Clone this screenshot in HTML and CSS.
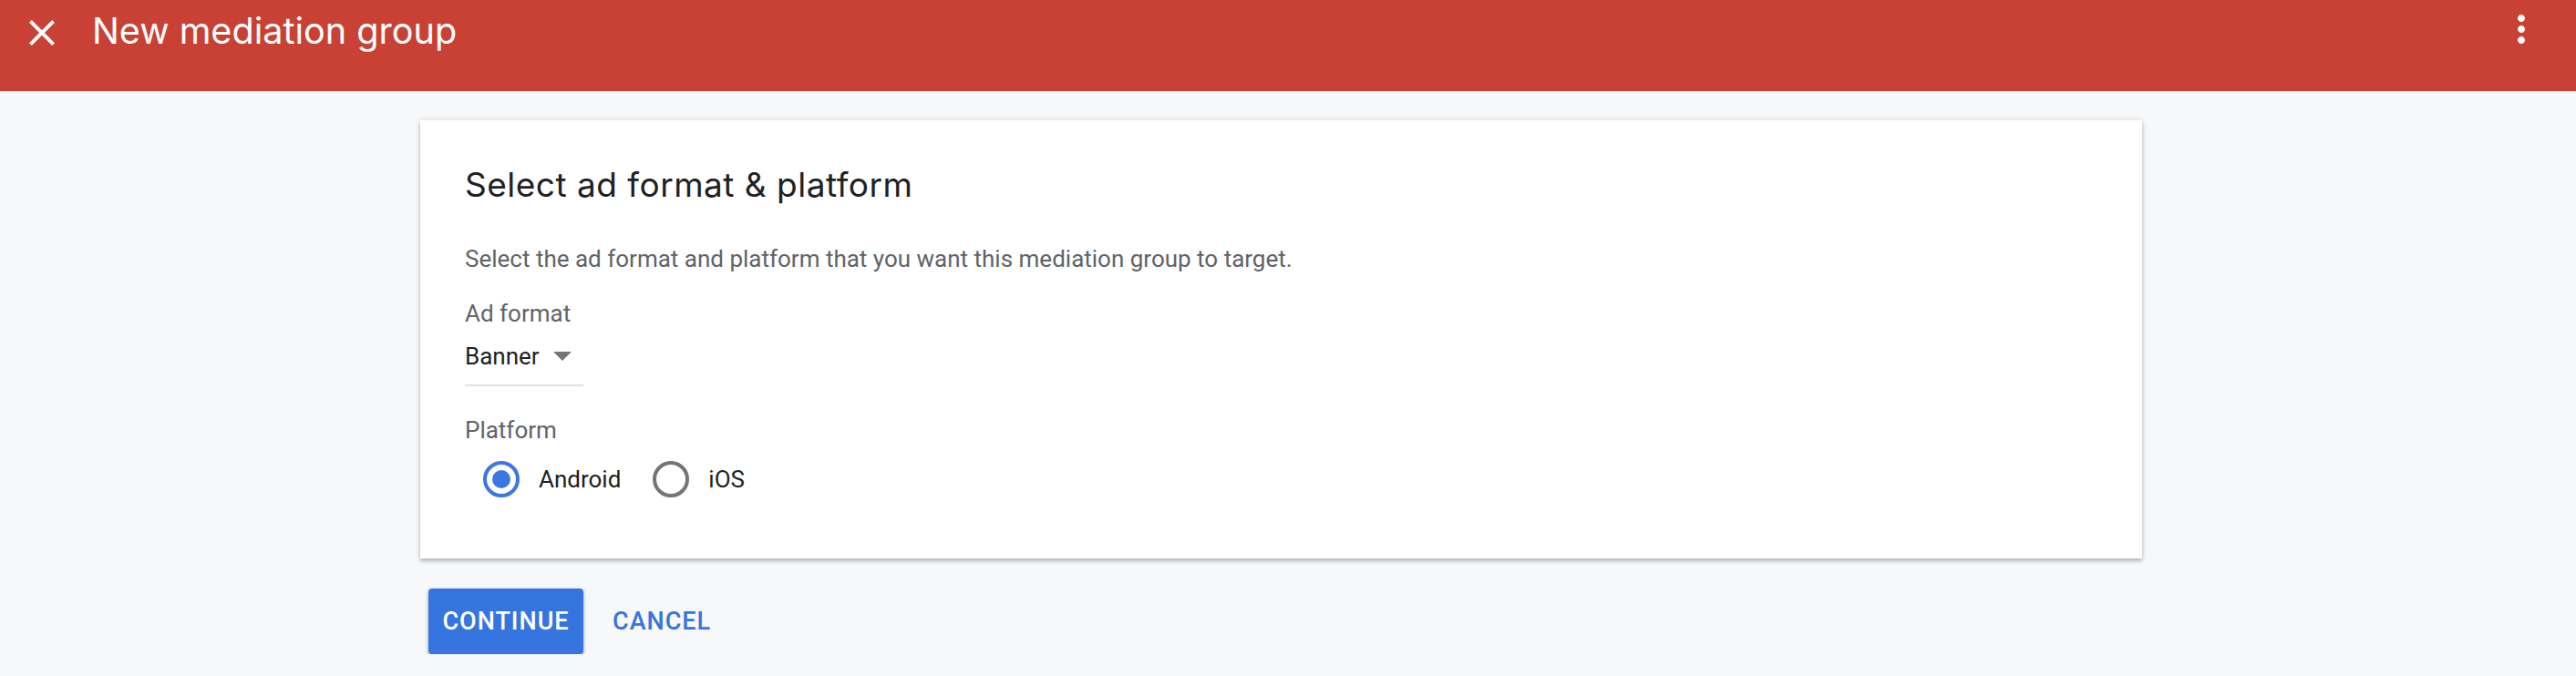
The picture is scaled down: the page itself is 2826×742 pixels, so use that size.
FILE: index.html
```html
<!DOCTYPE html>
<html lang="en">
<head>
<meta charset="utf-8">
<title>New mediation group</title>
<link rel="stylesheet" href="styles.css">
</head>
<body>
<header class="topbar">
  <button class="icon-btn close-btn" aria-label="Close">
    <svg viewBox="0 0 24 24" width="48" height="48"><path fill="#fff" d="M19 6.41L17.59 5 12 10.59 6.41 5 5 6.41 10.59 12 5 17.59 6.41 19 12 13.41 17.59 19 19 17.59 13.41 12z"/></svg>
  </button>
  <h1 class="topbar-title">New mediation group</h1>
  <button class="icon-btn menu-btn" aria-label="More options">
    <svg viewBox="0 0 24 24" width="48" height="48"><path fill="#fff" d="M12 8c1.1 0 2-.9 2-2s-.9-2-2-2-2 .9-2 2 .9 2 2 2zm0 2c-1.1 0-2 .9-2 2s.9 2 2 2 2-.9 2-2-.9-2-2-2zm0 6c-1.1 0-2 .9-2 2s.9 2 2 2 2-.9 2-2-.9-2-2-2z"/></svg>
  </button>
</header>

<main class="content">
  <section class="card">
    <h2 class="card-title">Select ad format &amp; platform</h2>
    <p class="card-desc">Select the ad format and platform that you want this mediation group to target.</p>

    <div class="field">
      <div class="field-label">Ad format</div>
      <div class="select">
        <span class="select-value">Banner</span>
        <svg class="select-arrow" viewBox="0 0 20 10" width="20" height="10"><path fill="#757575" d="M0 0h20L10 10z"/></svg>
      </div>
    </div>

    <div class="field platform">
      <div class="field-label">Platform</div>
      <div class="radio-group">
        <label class="radio-option">
          <span class="radio checked"><span class="radio-dot"></span></span>
          <span class="radio-label">Android</span>
        </label>
        <label class="radio-option">
          <span class="radio"></span>
          <span class="radio-label">iOS</span>
        </label>
      </div>
    </div>
  </section>

  <div class="actions">
    <button class="btn btn-primary">CONTINUE</button>
    <button class="btn btn-text">CANCEL</button>
  </div>
</main>
</body>
</html>
```
FILE: styles.css
```css
* { box-sizing: border-box; }

body {
  margin: 0;
  background: #f7f8fa;
  font-family: Roboto, "Liberation Sans", sans-serif;
  color: #202124;
}

.topbar {
  height: 100px;
  background: #c84134;
  display: flex;
  align-items: flex-start;
}

.icon-btn {
  border: 0;
  padding: 0;
  background: transparent;
  width: 48px;
  height: 48px;
  display: block;
}
.icon-btn svg { display: block; }

.close-btn {
  margin: 12px 0 0 22px;
}

.topbar-title {
  margin: 10px 0 0 31px;
  font-family: Inter, Roboto, sans-serif;
  font-weight: 400;
  font-size: 39.6px;
  line-height: 48px;
  color: #fff;
}

.menu-btn {
  margin: 8px 36px 0 auto;
}

.content {
  width: 1889px;
  margin: 32px 0 0 461px;
}

.card {
  background: #fff;
  height: 481px;
  padding: 47px 49px 0;
  box-shadow: 0 3px 4px rgba(0, 0, 0, 0.22), 0 0 7px rgba(0, 0, 0, 0.12);
}

.card-title {
  margin: 0;
  font-family: Inter, Roboto, sans-serif;
  font-weight: 400;
  font-size: 37px;
  letter-spacing: 0.5px;
  line-height: 48px;
  color: #202124;
}

.card-desc {
  margin: 39px 0 0;
  font-size: 26px;
  line-height: 36px;
  color: #5f6368;
}

.field { margin-top: 24px; }

.field-label {
  font-size: 26px;
  line-height: 36px;
  color: #5f6368;
}

.select {
  margin-top: 11px;
  width: 130px;
  display: flex;
  align-items: center;
  padding-bottom: 13px;
  border-bottom: 2px solid #e1e1e1;
}

.select-value {
  font-size: 26px;
  line-height: 36px;
  color: #202124;
}

.select-arrow {
  margin-left: 15px;
  display: block;
}

.platform { margin-top: 30px; }

.radio-group {
  margin-top: 16px;
  display: flex;
  align-items: center;
  gap: 15px;
}

.radio-option {
  display: flex;
  align-items: center;
}

.radio {
  width: 40px;
  height: 40px;
  margin: 0 21px 0 20px;
  border-radius: 50%;
  border: 4px solid #757575;
  display: flex;
  align-items: center;
  justify-content: center;
}

.radio.checked { border-color: #3a78e0; }

.radio-dot {
  width: 20px;
  height: 20px;
  border-radius: 50%;
  background: #3a78e0;
}

.radio-label {
  font-size: 26px;
  line-height: 36px;
  color: #202124;
}

.actions {
  margin: 33px 0 0 9px;
  display: flex;
  align-items: center;
}

.btn {
  border: 0;
  font-family: Roboto, sans-serif;
  font-weight: 500;
  font-size: 27px;
  letter-spacing: 1px;
  height: 72px;
  border-radius: 4px;
  cursor: pointer;
}

.btn-primary {
  width: 170px;
  padding: 0;
  background: #3675e0;
  color: #fff;
  box-shadow: 0 3px 4px rgba(0, 0, 0, 0.24), 0 0 4px rgba(0, 0, 0, 0.12);
}

.btn-text {
  margin-left: 16px;
  padding: 0 16px;
  background: transparent;
  color: #3675e0;
}
```
